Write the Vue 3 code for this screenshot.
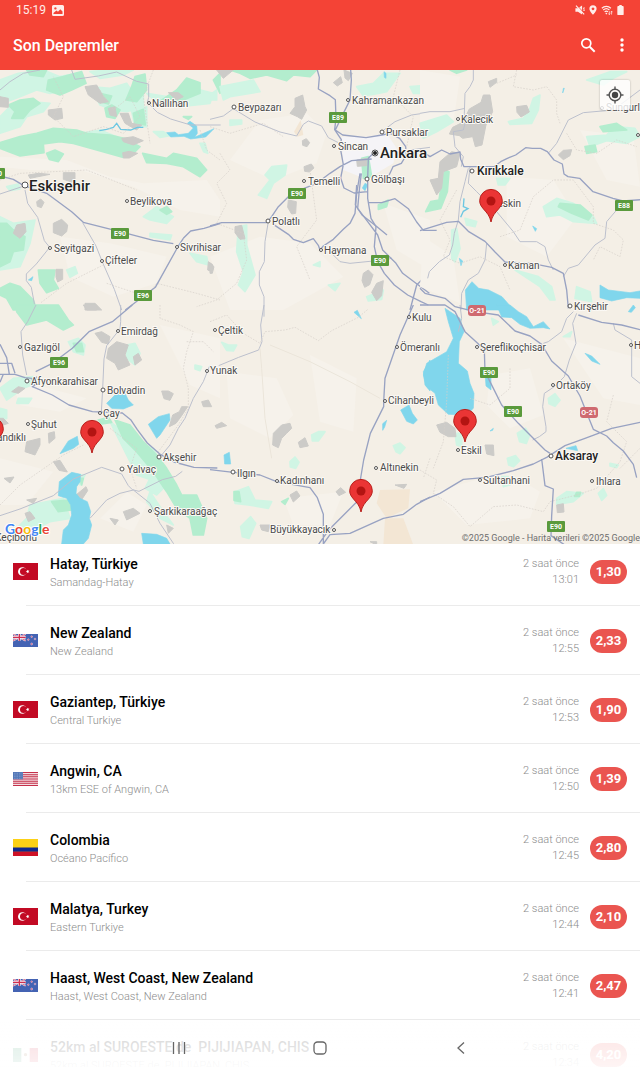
<template>
  <div class="app">
    <header class="top">
      <div class="status">
        <span class="clock">15:19</span>
        <svg class="picture" viewBox="0 0 12 11" width="12" height="11">
          <path fill="currentColor" fill-rule="evenodd"
            d="M1.5 0h9A1.5 1.5 0 0 1 12 1.500v8A1.500 1.500 0 0 1 10.500 11h-9A1.500 1.500 0 0 1 0 9.500v-8A1.500 1.500 0 0 1 1.500 0zM1.500 9h9V6.500L8.300 4.200 6 6.800 4.400 5.600 1.500 8zM3.400 2.200a1.200 1.200 0 1 0 .01 0z" />
        </svg>
        <div class="status-icons">
          <svg viewBox="0 0 12 12" width="10" height="10">
            <path fill="currentColor" d="M.5 3.800h3L8.500 .5v11L3.500 8.200h-3z" />
            <path d="M2.200 .4l9.500 10" stroke="#f44336" stroke-width="1.200" />
            <path d="M1.200 .8l9.800 10.400M9.800 4.200l1.800-.8M9.800 6.200h2" stroke="currentColor" stroke-width="1.400" />
          </svg>
          <svg viewBox="0 0 10 12" width="8" height="10">
            <path fill="currentColor" fill-rule="evenodd"
              d="M5 0a4.500 4.500 0 0 1 4.500 4.500C9.500 7.500 5 12 5 12S.5 7.500 .5 4.500A4.500 4.500 0 0 1 5 0zM5 2.800a1.700 1.700 0 1 0 .01 0z" />
          </svg>
          <svg viewBox="0 0 14 12" width="12" height="10" fill="none" stroke="currentColor" stroke-width="1.500">
            <path d="M.8 3.800a8 8 0 0 1 10.800 0M2.500 6a5.500 5.500 0 0 1 7.400 0M4.200 8.200a3 3 0 0 1 4 0" />
            <circle cx="6.200" cy="10.300" r="1" fill="currentColor" stroke="none" />
            <path d="M9.800 7.500v4M8.600 10.200l1.200 1.400 1.100-1.400M12.500 11.500v-4M11.400 8.700l1.100-1.300 1.200 1.300" stroke-width=".9" />
          </svg>
          <svg viewBox="0 0 8 12" width="7" height="10">
            <path fill="currentColor" d="M2.500 0h3v1.300h1.300a1 1 0 0 1 1 1V11a1 1 0 0 1-1 1H1.200a1 1 0 0 1-1-1V2.300a1 1 0 0 1 1-1h1.300z" />
          </svg>
        </div>
      </div>
      <div class="toolbar">
        <h1>Son Depremler</h1>
        <button type="button" class="tool" aria-label="Ara">
          <svg viewBox="0 0 16 16" width="16" height="16" fill="none" stroke="currentColor">
            <circle cx="6.300" cy="6.300" r="4.500" stroke-width="1.700" />
            <path d="M9.700 9.700l5 5" stroke-width="2" />
          </svg>
        </button>
        <button type="button" class="tool more" aria-label="Menü">
          <svg viewBox="0 0 4 14" width="4" height="14" fill="currentColor">
            <circle cx="2" cy="2" r="1.700" />
            <circle cx="2" cy="7" r="1.700" />
            <circle cx="2" cy="12" r="1.700" />
          </svg>
        </button>
      </div>
    </header>

    <section class="map">
      <svg class="map-canvas" viewBox="0 0 640 474">
        <rect width="640" height="474" class="land" />
        <!-- tiles are drawn at three times the map scale -->
        <g v-for="tile in tiles" :key="tile.x + '-' + tile.y"
          :transform="`translate(${tile.x} ${tile.y}) scale(0.33333)`">
          <path v-for="(s, i) in tile.shapes" :key="i" :class="s[0]" :d="s[1]" />
        </g>

        <g v-for="(s, i) in shields" :key="'s' + i" :transform="`translate(${s[0]} ${s[1]})`">
          <rect :class="s[2][0] === 'O' ? 'shield-red' : 'shield'" x="-9" y="-6" width="18" height="11"
            :rx="s[2][0] === 'O' ? 3 : 1" />
          <text class="shield-text" y="2" text-anchor="middle">{{ s[2] }}</text>
        </g>

        <circle v-for="(t, i) in dots" :key="'d' + i" class="dot" :cx="t[0]" :cy="t[1]" :r="t[2]" />
        <circle class="dot" cx="375" cy="83" r="3" />
        <circle cx="375" cy="83" r="2" fill="#222" />

        <text v-for="(t, i) in towns" :key="'t' + i" class="town" :class="t[3]" :x="t[0]" :y="t[1]">{{ t[2] }}</text>
        <text class="town" x="521" y="137" text-anchor="end">Keskin</text>
        <text class="town" x="26" y="371" text-anchor="end">Sandıklı</text>
        <text class="town" x="37" y="471" text-anchor="end">Keçiborlu</text>

        <g v-for="(p, i) in pins" :key="'p' + i" :transform="`translate(${p[0]} ${p[1]})`">
          <path class="pin"
            d="M0 0C-1-6-4-9-7.500-13C-10-16-11.300-18-11.300-21.300A11.300 11.300 0 0 1 11.300-21.300C11.300-18 10-16 7.500-13C4-9 1-6 0 0z" />
          <circle cy="-21" r="4.500" fill="#b31412" />
        </g>

        <text class="google" x="5" y="464"><tspan fill="#4285f4">G</tspan><tspan fill="#ea4335">o</tspan><tspan
            fill="#fbbc05">o</tspan><tspan fill="#4285f4">g</tspan><tspan fill="#34a853">l</tspan><tspan
            fill="#ea4335">e</tspan></text>
        <text class="copyright" x="640" y="471" text-anchor="end">©2025 Google - Harita verileri ©2025 Google</text>
      </svg>
      <button type="button" class="locate" aria-label="Konumum">
        <svg viewBox="0 0 18 18" width="18" height="18" fill="none" stroke="#555" stroke-width="1.400">
          <circle cx="9" cy="9" r="5.800" />
          <circle cx="9" cy="9" r="3.200" fill="#444" stroke="none" />
          <path d="M9 .5v3M9 14.500v3M.5 9h3M14.500 9h3" />
        </svg>
      </button>
    </section>

    <ul class="list">
      <li v-for="(q, i) in quakes" :key="i" class="row">
        <span class="flag">
          <svg v-if="q.flag === 'tr'" viewBox="0 0 75 51" width="25" height="17">
            <rect width="75" height="51" fill="#c20a24" />
            <circle cx="28" cy="25.500" r="13" fill="#fff" />
            <circle cx="31.500" cy="25.500" r="10.500" fill="#c20a24" />
            <path fill="#fff" d="M38 25.500l4-1.500V20l3 3.400 4-1.400-2.200 3.500 2.200 3.500-4-1.400-3 3.400V27z" />
          </svg>
          <svg v-else-if="q.flag === 'nz'" viewBox="0 0 75 39" width="25" height="13">
            <rect width="75" height="39" fill="#4463b3" />
            <path d="M0 0l38 20M38 0L0 20" stroke="#f2e4ee" stroke-width="5" />
            <path d="M0 0l38 20M38 0L0 20" stroke="#d04060" stroke-width="2" />
            <path d="M19 0v20M0 10h38" stroke="#f7eef4" stroke-width="8" />
            <path d="M19 0v20M0 10h38" stroke="#cf2f4f" stroke-width="4" />
            <g fill="#e2496b" stroke="#dfe5f6" stroke-width="1.500">
              <circle cx="56" cy="8" r="2.500" />
              <circle cx="46" cy="17" r="2.500" />
              <circle cx="66" cy="15" r="2.500" />
              <circle cx="56" cy="30" r="3" />
            </g>
          </svg>
          <svg v-else-if="q.flag === 'us'" viewBox="0 0 75 42" width="25" height="14">
            <rect width="75" height="42" fill="#f3dde2" />
            <path d="M0 1.600h75M0 8.100h75M0 14.500h75M0 21h75M0 27.500h75M0 33.900h75M0 40.400h75" stroke="#c5304a"
              stroke-width="3.200" />
            <rect width="30" height="22" fill="#5478b8" />
            <path d="M3 4h26M3 9h26M3 14h26M3 19h26" stroke="#b9cae6" stroke-width="1.500" stroke-dasharray="2 3" />
          </svg>
          <svg v-else-if="q.flag === 'co'" viewBox="0 0 75 51" width="25" height="17">
            <rect width="75" height="51" fill="#fcd116" />
            <rect y="25.500" width="75" height="13" fill="#10298e" />
            <rect y="38" width="75" height="13" fill="#ce1126" />
          </svg>
          <svg v-else viewBox="0 0 75 42" width="25" height="14">
            <rect width="75" height="42" fill="#fff" />
            <rect width="25" height="42" fill="#1f8a5b" />
            <rect x="50" width="25" height="42" fill="#d0203a" />
            <circle cx="37.500" cy="20" r="5" fill="#8c6239" />
          </svg>
        </span>
        <div class="place">
          <h2>{{ q.title }}</h2>
          <p>{{ q.area }}</p>
        </div>
        <div class="when">
          <span>{{ q.ago }}</span>
          <time>{{ q.time }}</time>
        </div>
        <span class="mag">{{ q.mag }}</span>
      </li>
    </ul>

    <nav class="navbar">
      <button type="button" aria-label="Son uygulamalar">
        <svg viewBox="0 0 14 14" width="14" height="14" fill="none" stroke="currentColor" stroke-width="1.300">
          <path d="M1.500 1v12M7 1v12M12.500 1v12" />
        </svg>
      </button>
      <button type="button" aria-label="Ana ekran">
        <svg viewBox="0 0 14 14" width="14" height="14" fill="none" stroke="currentColor" stroke-width="1.300">
          <rect x="1" y="1" width="12" height="12" rx="3.500" />
        </svg>
      </button>
      <button type="button" aria-label="Geri">
        <svg viewBox="0 0 14 14" width="14" height="14" fill="none" stroke="currentColor" stroke-width="1.300">
          <path d="M10 1.500L4 7l6 5.500" />
        </svg>
      </button>
    </nav>
  </div>
</template>

<script setup>
import { ref } from 'vue';

const quakes = ref([
  { flag: 'tr', title: 'Hatay, Türkiye', area: 'Samandag-Hatay', ago: '2 saat önce', time: '13:01', mag: '1,30' },
  { flag: 'nz', title: 'New Zealand', area: 'New Zealand', ago: '2 saat önce', time: '12:55', mag: '2,33' },
  { flag: 'tr', title: 'Gaziantep, Türkiye', area: 'Central Turkiye', ago: '2 saat önce', time: '12:53', mag: '1,90' },
  { flag: 'us', title: 'Angwin, CA', area: '13km ESE of Angwin, CA', ago: '2 saat önce', time: '12:50', mag: '1,39' },
  { flag: 'co', title: 'Colombia', area: 'Océano Pacífico', ago: '2 saat önce', time: '12:45', mag: '2,80' },
  { flag: 'tr', title: 'Malatya, Turkey', area: 'Eastern Turkiye', ago: '2 saat önce', time: '12:44', mag: '2,10' },
  { flag: 'nz', title: 'Haast, West Coast, New Zealand', area: 'Haast, West Coast, New Zealand', ago: '2 saat önce', time: '12:41', mag: '2,47' },
  { flag: 'mx', title: '52km al SUROESTE de\u00a0 PIJIJIAPAN, CHIS', area: '52km al SUROESTE de\u00a0 PIJIJIAPAN, CHIS', ago: '2 saat önce', time: '12:34', mag: '4,20' },
]);

const pins = [[491, 152], [92, 383], [465, 372], [361, 442], [-8, 380]];

const towns = [
  [152, 37, 'Nallıhan'], [29, 121, 'Eskişehir', 'city'], [130, 135, 'Beylikova'], [54, 182, 'Seyitgazi'],
  [105, 194, 'Çifteler'], [180, 181, 'Sivrihisar'], [352, 34, 'Kahramankazan'], [238, 41, 'Beypazarı'],
  [386, 66, 'Pursaklar'], [338, 80, 'Sincan'], [380, 88, 'Ankara', 'city'], [308, 115, 'Temelli'],
  [371, 113, 'Gölbaşı'], [272, 155, 'Polatlı'], [324, 184, 'Haymana'], [461, 53, 'Kalecik'],
  [477, 105, 'Kırıkkale', 'mid'], [508, 199, 'Kaman'], [574, 240, 'Kırşehir'], [606, 41, 'Sungurlu'],
  [121, 265, 'Emirdağ'], [24, 281, 'Gazlıgöl'], [31, 315, 'Afyonkarahisar'], [107, 324, 'Bolvadin'],
  [103, 347, 'Çay'], [31, 358, 'Şuhut'], [163, 391, 'Akşehir'], [127, 403, 'Yalvaç'],
  [154, 445, 'Şarkikaraağaç'], [218, 264, 'Çeltik'], [210, 304, 'Yunak'], [412, 251, 'Kulu'],
  [400, 281, 'Ömeranlı'], [388, 334, 'Cihanbeyli'], [237, 407, 'Ilgın'], [280, 414, 'Kadınhanı'],
  [380, 401, 'Altınekin'], [270, 463, 'Büyükkayacık'], [480, 281, 'Şereflikoçhisar'], [634, 279, 'Hacıbektaş'],
  [556, 319, 'Ortaköy'], [461, 384, 'Eskil'], [555, 390, 'Aksaray', 'mid'], [483, 414, 'Sultanhani'],
  [596, 415, 'Ihlara'],
];

const dots = [
  [149, 33, 1.5], [25, 115, 3], [127, 131, 1.5], [50, 178, 1.5], [102, 191, 1.5], [177, 177, 1.5],
  [348, 30, 1.5], [234, 37, 2], [382, 62, 2], [334, 76, 1.5], [304, 111, 1.5], [367, 109, 2],
  [268, 151, 2], [321, 180, 1.5], [458, 49, 1.5], [472, 101, 2], [505, 195, 1.5], [570, 236, 2],
  [602, 38, 1.5], [638, 65, 1.5], [118, 261, 1.5], [20, 277, 1.5], [27, 311, 2], [103, 320, 2],
  [100, 343, 1.5], [28, 354, 1.5], [159, 387, 2], [122, 399, 2], [150, 441, 1.5], [215, 260, 1.5],
  [207, 301, 1.5], [409, 247, 1.5], [397, 277, 1.5], [385, 331, 1.5], [233, 402, 2], [277, 411, 1.5],
  [376, 398, 1.5], [334, 460, 1.5], [477, 277, 1.5], [631, 275, 1.5], [553, 315, 1.5], [458, 380, 1.5],
  [551, 386, 2], [480, 410, 1.5], [592, 411, 1.5],
];

const shields = [
  [120, 164, 'E90'], [143, 226, 'E96'], [-4, 104, 'E90'], [338, 48, 'E89'], [297, 124, 'E90'], [380, 191, 'E90'],
  [624, 136, 'E88'], [59, 293, 'E96'], [489, 303, 'E90'], [513, 342, 'E90'], [556, 457, 'E90'],
  [477, 241, 'O-21'], [589, 343, 'O-21'],
];

const tiles = [
  {
    x: 0, y: 0, shapes: [
      ['pale', 'M0 260L200 270 330 320 430 340 620 330 660 390 660 440 540 420 400 350 240 300 90 300 0 290zM180 500L330 520 500 560 470 640 340 680 210 620z'],
      ['mint-light', 'M0 30L55 10 130 0 180 20 230 10 245 35 200 60 150 70 110 60 60 80 20 95 0 90zM30 110L90 95 150 100 130 125 80 140 60 170 0 190 0 140zM270 50L330 55 380 40 400 70 430 75 430 110 380 125 340 120 300 105zM395 125L440 110 440 170 405 170zM150 190L200 180 240 190 300 180 350 200 300 215 200 205zM440 70L500 80 560 50 640 70 630 100 540 110 470 96zM430 440L470 410 520 440 500 460 450 450zM450 490L515 495 510 510 450 500zM570 550L620 560 625 585 590 575zM0 440L40 460 105 450 90 520 60 590 0 600zM200 600L225 590 232 610 210 622zM270 5L320 0 400 0 370 15 300 25zM460 185l30 0 20 12-30 5zM600 220l15 0 8 30-12-5zM20 350l35-8 5 15-30 5z'],
      ['mint', 'M25 105L60 90 100 85 120 100 90 120 70 145 35 145 45 125zM80 0H140L130 20 90 15zM145 30L190 20 245 5 258 40 215 60 180 75 140 60zM395 50L405 20 435 12 440 60 410 95 378 90zM315 115L335 105 360 120 345 145 320 140zM290 68L335 78 325 102 300 95zM400 130L430 118 436 165 405 160zM0 218L60 200 110 190 160 175 230 180 260 190 330 195 372 205 420 230 400 250 370 262 290 240 220 220 180 215 130 222 132 248 60 258 0 235zM140 250L165 240 190 252 175 275 148 268zM428 250L500 265 520 250 590 265 620 300 600 320 550 290 500 280 440 278zM470 100L530 60 560 24 600 38 600 70 550 90 490 95zM640 30l20-20v60zM0 460L20 460 40 480 75 500 70 540 40 545 30 575 0 590zM115 600L165 600 160 630 175 655 140 668 120 640zM0 655L30 640 60 650 100 690 110 720 40 720 20 685 0 675zM550 140h25l-10 8zM480 420l20-10 15 15-15 8z'],
      ['grey', 'M255 50L290 45 310 80 325 95 300 100 265 75zM325 115L345 110 350 140 330 135zM145 120L185 115 188 145 165 150 145 135zM0 80L25 85 25 112 0 110zM360 130L385 130 395 160 425 165 410 180 375 160zM365 205L400 200 430 212 400 225 370 215zM368 248l20-4 25 6-25 14-18 0zM190 308h35v20l-10 8-25-8zM85 315l30-5 35 3-40 8-20 4zM110 395l12-8 10 10-8 16-12-4zM160 460L185 448 203 465 200 485 185 498 160 488zM50 465L75 460 78 485 60 505 40 490zM168 598h20v30l-15 8-5-15zM505 68h30l15 12-20 10zM625 575l15 10-5 20-12-5zM255 700h30l20 20h-50z'],
      ['water-line', 'M298 182l22-4 20-6 10-12 12 18 30 2 20-8h18'],
      ['water', 'M500 188l25-2 10 8 30-4 15-16-18-14 8-6 20 14 2 22-8 12 58-26-25 25-45 6-20-8-40 2zM85 630l14-10-4 12z'],
      ['minor', 'M215 0l10 28 70-10 55-12 60 28 36 8v40l-4 15 30 30 40 20 60 18 90 0M75 360l8 40 30 42 20 70 16 20-40 50-30 30 0 20 15 20 12 65M248 458l40 70 20 50 35 80 22 62M0 372l45-15 30-10M0 60l30-25 40-25 50-10'],
      ['border', 'M300 60l40 60 50-40 30 60-50 50-60-20-90 30-60-60 30-60-30-60M370 560l-50 20-120 60-80 60M600 180l20 60 40 30M320 640l120 40 30-40 120 30 70 20M0 330l60-20 200-10 150 60 M460 0l-30 80 20 140'],
      ['road', 'M0 318l40 10 30 18 70 24 75 55 35 32 110 28 100 26 60 10M376 720l90-68 64-115M550 505l22-22 40-8 48-14M530 536l20-31'],
    ],
  },
  {
    x: 210, y: 0, shapes: [
      ['pale', 'M150 150L290 130 350 190 320 280 190 330 60 270zM0 560L150 500 300 520 400 620 220 720 60 720zM520 400L660 450 660 600 560 540z'],
      ['urban', 'M395 200L480 200 530 190 560 235 550 280 500 310 475 330 400 300z'],
      ['mint-light', 'M30 50L130 30 150 65 60 80 40 90zM440 50l50-10 30-30 50 0-40 55-40 8-30 4zM600 50l60-5v25h-50zM60 150l35 0v12l-35 4zM145 375L180 330 165 315 185 290 230 285 225 315 190 340 170 385zM0 75l20-15v30H0zM85 470l25-5 0 60 25 90-30 50-20-20 15-40-20-60zM310 585l20-10v15zM355 645l35-5-15 22zM470 680l50-20-5 28-40 5z'],
      ['mint', 'M60 0H320L300 20 250 15 230 32 170 15 120 25 90 10zM455 265l20-5 10 60-25 5zM505 405l30-15-5 20-25 8z'],
      ['urban-tan', 'M252 185l20-35 8 45-18 5z'],
      ['grey', 'M255 85L278 75 285 110 290 120 275 148 262 140 240 130 255 110zM20 0h50l-30 25zM370 38l22-18 5 18-15 10zM402 0l25 10-12 22-10-8zM277 212l12-6 10 12-8 12-13-4zM282 290l22-8 8 12-14 12-14-2zM235 390l24 5-2 35-12 2-12-20zM75 470l20-4 10 40-15 2-15-20zM440 270l30-5v22l-28 2zM460 610l15-10 14 14-10 30-15 8-8-20zM500 640l20-8-5 45-15 15-15-25zM0 580l12 10-5 20H0z'],
      ['water', 'M465 340l8 4-8 18-8-8zM522 5l6 5v15l-5-3z'],
      ['minor', 'M0 148l40-10 30-22 65 40 75 30 50 12 20-35 15-10 40 15 20 35 30 15M175 455l-10 60-2 60-15 30v40l14 35v60M360 545l30 30 30 5 60-6 50-4 15-6M515 185l40-30 50-20 55-8M600 240l60-8'],
      ['border', 'M0 170l60 20 100-30 60 40M30 250l30 50-40 40 30 60-30 60 80 30 10 80-30 70-60 50-60 20M570 0l-20 80 60 60-20 90M300 300l20 150-60 80 40 100'],
      ['road', 'M322 0l6 22-3 35 35 20 16 12 2 55-4 35 20 30-4 20 10 55 -8 40 10 30 30 15 40-4M422 0l2 30-4 60-20 40-24 50 22 15 70 8 48-8 25-5 28 15 18 25 2 25-15 25-25 10-10 22-28 27M0 468l35-10h135l15-18 20-30 30-30 40-22 45-18 40-30 30-20 35-18 60-5M190 463l45 30 15 15 30 10 30-12 15 20 5 14 10-12 30-20 30-30 20-18 15-30 5-60 10-60M454 310l-6 50-5 55 30 40 30 40 15 45 40 40 20 30 40 30 40 30M473 325v60l10 60 15 25-5 60 10 45 20 35 30 35 40 30 40 20 22 10M475 398l40 0 40-12 40 30 25 40 20 25 40 0'],
      ['road', 'M440 345l-4 60 20 30 45 35 30 25M600 720l20-75 35-35 5-2M473 325l2-60 15-15'],
    ],
  },
  {
    x: 420, y: 0, shapes: [
      ['pale', 'M260 320L400 330 470 440 380 560 260 500zM480 180L640 200 660 350 560 330zM10 500L100 560 120 700 0 650zM0 0L120 20 100 160 0 160z'],
      ['mint-light', 'M500 30l70-25h50l-40 20-30 20zM265 155l45-10 20-30 10-30 20-10-5 45-20 40-65 3zM0 160l80-25 20 20-50 30-40 20zM500 200l60-5 25-25 60 5 15 25-40 20-60-8-50 18zM370 410l40-25 50 15 60 40 10 20-70-5-40-20-40 5zM135 445l35 10-5 15-25-5zM95 480l15-4 10 60-15 40-10-10zM285 600l70 20 40 30 10 40-15 0-30-40zM470 650l40 15 5 30-50-10zM230 325l40 0-15 20-20 0z'],
      ['mint', 'M75 300l12 5-5 60-20 50-45 10 15-30 25-5 8-50zM420 400l60 5 35 30-10 15-50-20-40-20zM540 170l50-10 30 20-70 5zM495 230l30-5 5 20-30 5zM140 0l-30 10-20-10z'],
      ['grey', 'M190 75l20 0 8 50-20 40-12 60-20 5-8-30-30 5-10-8-30-5 10-20 30-15 20-40 35-20zM205 35l25-10v12l-20 15zM290 110l30-4 8 20-25 15-12-14zM415 255l15-14 25-2-5 18-20 12zM95 245l25 5-10 40-40 15-5 50-15 20-20-45 25-5 5-50z'],
      ['water-line', 'M132 385l-2 25 14 6-14 8-8 18'],
      ['water', 'M118 565l10 8-5 14zM338 468l12 8-4 8zM140 720l-4-60 20-25 20 20 30 5 40 20 35 40zM540 645l25 15 65 8 30-5v22l-40-2-45 10-35-10zM430 55l3 0-5 14z'],
      ['minor', 'M160 0l0 30-10 20-15 20-2 60 2 30-5 20-30 5 5 45 25 30-6 30M660 60l-80 60-90 8-45 22-15 30-20 40-25 30M150 290l-5 50 25 25 60 60 50 60 20 30 50 0 25 15 10 40 15 30M145 295l-10 40-15 60-5 55-12 40-5 35-10 30-30 20-30 30-5 20M200 520l-5 50-20 40-30 20-20 40-2 50M0 130l30-5 60 0 45-10M590 420l-30 35-5 50-30 20-50 60-30 10-15 25'],
      ['border', 'M290 0l-10 50 60 10 40-10 30 40v40l10 30M230 40l60-25M240 500l60-20 40-100 60-50 60 0 60 80 0 50 60 20 30 30-10 50-60-30-20 40M440 190l30 50 60 10 60-40 60 20M110 360l-50 90 30 60-20 50 50 20 60-20 60 30 30 70'],
      ['road', 'M0 240l30 20 35-20 25 12 30-6 2 22 10 22 90 0 20-15 20-10 25-10 30-22 20 2 25 0 20 10 20 25 25 12 5 30 12 8 35 5 40 40 60 20 30 8 80-6M0 482l80-25 35-3 30 30 50 30 30 32 30 30 80 4 60 12 35 18 10 50 5 55M0 655l15 15 60 15 30 25'],
    ],
  },
  {
    x: 0, y: 235, shapes: [
      ['pale', 'M30 220L260 280 180 320 60 300zM480 60L660 100 660 280 570 240zM0 460L160 500 80 600 0 600zM380 560L440 600 400 680 300 640z'],
      ['mint-light', 'M205 110l30-10 20 20-5 30-30-10zM380 120l25-5 15 30-15 35-25-20zM0 250l40-30 60-5 20 15-50 20-50 35zM0 310l20 5v25l-20 5zM55 280l40 0-10 15-35 0zM450 560l40 60 30 40-40-20-40-50zM90 600l100-20 20 60-60 10-60 30-60 10 50-50zM235 510l20 0-15 30zM585 180l20 5-5 12-15-5zM450 520l50 20-30 30-35-20zM330 350l80 60 50 20 30 60-20 40-60-20-30-60z'],
      ['mint', 'M50 0H175L205 45 220 60 190 75 140 45 80 60 50 20zM345 345L390 360 430 410 470 450 500 490 530 540 545 570 590 570 620 640 610 690 580 690 570 640 530 610 500 560 460 500 410 440 370 400zM295 345l30-8 10 15-30 5zM155 590l50-5 10 30-40 5zM220 115l25 0 5 25-20 0zM240 520l10 0-5 20z'],
      ['grey', 'M325 130L350 110 385 120 375 150 390 180 355 195 345 175 320 160zM285 85l20-5 25 15-5 22-20-5zM250 0h40v15h-30zM400 155l15-10 10 20-20 15zM35 260l20-15 20 5-20 15zM485 258l20 0 15 8-10 20-18-5zM545 305l18 0-20 30-15 20-20 10 10-35 20-10zM605 290l20-5 10 20-25 0zM80 410l40-10 0 20-15 30-30-10zM145 385l18-5 2 20-18 15zM160 470l20-4 22 35-25-5zM12 520l30-4-12 18zM228 570l30-25 5 12-20 30zM0 340h10l15 15-15 5zM80 585l30-5-10 15zM370 620l30-10 20 15-40 20zM330 640l25 5-10 15zM75 625l15-5 15 20-20 10zM500 660l20 10-15 15z'],
      ['water', 'M320 295L345 270 375 265 385 285 400 300 370 312 335 310zM445 358L475 335 508 326 510 345 480 390 470 400zM205 408L232 394 236 418 220 430 180 446zM178 530L215 502 242 508 240 530 230 545 228 565 240 580 262 590 272 620 268 640 275 660 265 700 250 717H185L190 675 205 660 215 630 212 600 200 580 175 572zM425 685L470 688 500 700 510 717H430z'],
      ['minor', 'M108 0l-25 50-20 30 5 70 12 60M362 0v50l-2 22-40 50-8 40-4 90-4 70M630 180l-20 50-30 50-25 60-20 30-25 50-25 30M0 632l60-20 100-40 60-50 85-35 60 20 20 35 12 12 20 5 70-35 40-10 20-15M270 640l50-55 40-20 40-10 50 40 30 60 40 60 20 25'],
      ['border', 'M480 0v40l60 20 40 20-20 60-10 50 15 60 0 60-30 50-60 80M330 370l80 60-20 60 20 60M0 600l60-60 130-90 60-30M560 110l50 0 30 30'],
      ['road', 'M397 0l-60 50-70 30-50 50-60 45-50 25M0 118l20 40 8 50M0 208l45 0 30 10 20 2 10 20-8 5 60 25 50 30 70 20 90 4 25 20 20 30 30 40 40 35 40 22 60 16 70 2M0 175l35 0 10 30M0 232l10-24M110 215l-10 20'],
    ],
  },
  {
    x: 210, y: 235, shapes: [
      ['pale', 'M50 200L200 220 250 330 180 400 60 340zM300 150L440 220 430 380 330 350zM220 580L400 560 360 660 250 660z'],
      ['sand', 'M510 555L600 553 595 610 550 630 530 640 500 595zM525 640L580 640 610 720H520z'],
      ['mint-light', 'M35 112l20 8 25 0-10 18-20-2zM305 390l20-10 20 0-20 28-18 0zM240 470l15-14 12 16-10 18-16-4zM550 422l20-8 15 14-15 18-12-6zM75 560l40-15 20 40 50 5-10 20-60-10-40-5zM92 665l30-30 15 20-20 45-20-5z'],
      ['mint', 'M215 590l20-10-10 18zM72 560l15 0 5 30-20-4z'],
      ['grey', 'M190 385L215 360 240 355 245 370 230 385 215 400 205 428 188 420zM265 412l20-14 10 25-25 5zM15 362l20-10 15 10-30 8zM378 560l14-12 15 14-20 10zM240 570l20-12 10 15-20 18zM150 660l30 0-5 20-20-5zM555 540l35-2-8 12zM480 710l20 0 0 10z'],
      ['water', 'M432 22l10-6 12 25zM572 315l25-15 10 25 15 20-12 12-20-8zM518 356l12-10-6 20-6 10zM660 165l-20 35 5 40 15 18zM42 450l16-8 4 35-18 0z'],
      ['minor', 'M162 0l-10 60 4 50-10 25-60 22-60 25'],
      ['faint', 'M150 130l5 60 10 150 20 120M180 120l120 50 120 60 90 50'],
      ['border', 'M0 50l50-20 50 55 50 30 15-35 60-5 30-8 70 40 40-30 80-40 30-25M660 460l-20 60'],
      ['road', 'M610 0l-40 90-45 130-4 70 0 15-40 80-20 80-10 60-5 60-30 30-60 60-35 50M0 494l70 8 80 8 50 20 100 18 22 30 18 50 0 90M340 717l20-28 60-4 100-45 60-12 40-30 40-22'],
    ],
  },
  {
    x: 420, y: 235, shapes: [
      ['pale', 'M210 210L330 190 370 330 270 370 200 300zM40 560L260 500 360 560 330 640 140 660zM430 100L660 160 660 300 550 280z'],
      ['mint-light', 'M385 280l20-14 15 20-15 18-18-8zM292 385l25-15 12 20-10 25-20-5zM105 385l20 0 0 40-15-5zM262 460l25-8 12 15-18 18-15-5zM245 515l20 0 5 25-20 5zM535 565l15-14 10 20-15 15zM410 580l30-20 50 5-30 25-50 8zM570 475l25 5-5 8-20-5zM430 95l25-15-5 15zM215 40l20 10-15 10z'],
      ['mint', 'M470 562l12 0-4 12-14 0z'],
      ['grey', 'M50 360L80 352 105 370 108 395 85 395 60 382zM195 420l25 0 2 32-22-5zM410 600l20-4 2 25-20 2z'],
      ['water', 'M75 10L120 40 132 80 118 110 115 175 142 198 150 235 162 265 160 310 140 330 85 328 55 300 45 265 20 245 10 210 20 175 80 140 100 100 85 50zM195 200l18 5 0 50-15-12zM230 0h40l25 20 25 15 20 30 30-15 20 22-20-4-40 2-30-12-25-20-30-2zM625 20l15-20 6 8-12 14zM438 430l30-8 5 15zM495 145l20 8 25 25-25-10zM210 378l10-8-2 6z'],
      ['minor', 'M470 25l-12 30 10 60-20 50-15 50-30 30-30 20-5 40 10 60 0 15-20 15-20 10M460 20l-20 20-15 40-40 30-15 5M580 55l5 20 50 30 0 110 25 20M120 0l5 40-10 40'],
      ['border', 'M0 495l50 30-10 40 60 40 50 60 70-60 70-5 80 20 20-30 80-20 60-20 70-80 20-60-60-60 20-80M85 150l-5 140-10 120-30 80M270 190l0 60-60 50-60-20M660 430l-60 60'],
      ['road', 'M0 0h75l30 20 30 60 38 35 20 20 2 65 30 60 20 40 50 55 50 50 30 30 15 10M0 590l60-25 70-42 70-6 80-20 60-20 40-20 55-35 60-22 80-30 85-18M105 5l60 15 70 10 50 48 45 15 35 25 30 50 50 45 35 60 20 50 20 50 40 20 20 20 30 25 30 40 10 40M365 462l10 80 25 10-5 80-2 60 40 27M475 30l70 22 60 8 55 14'],
    ],
  },
];
</script>

<style>
body {
  margin: 0;
}
</style>

<style scoped>
.app {
  height: 100vh;
  overflow: hidden;
  display: flex;
  flex-direction: column;
  background: #fff;
  font-family: Roboto, "Liberation Sans", sans-serif;
}

button {
  border: 0;
  padding: 0;
  background: none;
  color: inherit;
  display: flex;
  align-items: center;
  justify-content: center;
}

.top {
  flex: none;
  background: #f44336;
  color: #fff;
}

.status {
  height: 20px;
  display: flex;
  align-items: center;
  padding: 0 16px;
  color: #ffece9;
}

.clock {
  font-size: 12px;
}

.picture {
  margin-left: 6px;
}

.status-icons {
  margin-left: auto;
  display: flex;
  align-items: center;
  gap: 4px;
}

.toolbar {
  height: 50px;
  display: flex;
  align-items: center;
  padding: 0 10px 0 13px;
}

.toolbar h1 {
  margin: 0;
  flex: 1;
  font-size: 16px;
  font-weight: 500;
}

.tool {
  width: 28px;
  height: 32px;
}

.more {
  width: 24px;
  margin-left: 8px;
  margin-right: -4px;
}

.map {
  position: relative;
  flex: none;
  z-index: 1;
}

.map-canvas {
  display: block;
  width: 100%;
}

.land {
  fill: #f4efe6;
}

.pale {
  fill: #f6f2eb;
}

.urban {
  fill: #f5f4f7;
}

.urban-tan,
.sand {
  fill: #f3e6d4;
}

.mint,
.mint-light {
  fill: #b3edce;
  stroke: #b3edce;
  stroke-width: 5;
  stroke-linejoin: round;
}

.mint-light {
  fill: #d0f5e4;
  stroke: #d0f5e4;
}

.grey {
  fill: #cccbc8;
  stroke: #cccbc8;
  stroke-width: 3;
  stroke-linejoin: round;
}

.water {
  fill: #80d6ec;
  stroke: #80d6ec;
  stroke-width: 2;
  stroke-linejoin: round;
}

.water-line {
  fill: none;
  stroke: #6cc7e2;
  stroke-width: 4;
}

.road {
  fill: none;
  stroke: #98a2c2;
  stroke-width: 4;
  stroke-linejoin: round;
}

.minor {
  fill: none;
  stroke: #bcc0cd;
  stroke-width: 3;
  stroke-linejoin: round;
}

.faint {
  fill: none;
  stroke: #ebe5da;
  stroke-width: 3;
}

.border {
  fill: none;
  stroke: #d5cfc8;
  stroke-width: 2;
  stroke-dasharray: 5 4;
}

.shield {
  fill: #5a9a3c;
}

.shield-red {
  fill: #cf6a70;
}

.shield-text {
  fill: #fff;
  font-size: 7px;
  font-weight: 700;
}

.dot {
  fill: #fff;
  stroke: #555;
  stroke-width: 1;
}

.town {
  font-size: 10px;
  fill: #4a4a4a;
  stroke: #fbf9f5;
  stroke-width: 2px;
  stroke-linejoin: round;
  paint-order: stroke;
}

.city {
  font-size: 15px;
  font-weight: 500;
  fill: #222;
}

.mid {
  font-size: 12px;
  font-weight: 500;
  fill: #222;
}

.pin {
  fill: #ea3535;
  stroke: #b8201c;
  stroke-width: 1;
}

.google {
  font-family: Lato, sans-serif;
  font-size: 14px;
  font-weight: 700;
  stroke: #fff;
  stroke-width: 2px;
  paint-order: stroke;
}

.copyright {
  font-size: 9px;
  fill: #6e6e6e;
}

.locate {
  position: absolute;
  top: 10px;
  right: 10px;
  width: 30px;
  height: 30px;
  background: rgba(255, 255, 255, 0.8);
  border-radius: 2px;
  box-shadow: 0 0 2px rgba(0, 0, 0, 0.3);
}

/* scrolled a little, so the first row starts under the map */
.list {
  list-style: none;
  margin: -7px 0 0;
  padding: 0;
}

.row {
  height: 69px;
  display: flex;
  align-items: center;
  padding: 0 13px;
  box-sizing: border-box;
  position: relative;
}

.row::after {
  content: "";
  position: absolute;
  left: 26px;
  right: 0;
  bottom: 0;
  height: 1px;
  background: #ebebeb;
}

.flag {
  width: 25px;
  margin-right: 12px;
  display: flex;
}

.place {
  flex: 1;
  min-width: 0;
  white-space: nowrap;
}

.place h2 {
  margin: 0;
  font-size: 14px;
  line-height: 22px;
  font-weight: 500;
  color: #000;
}

.place p {
  margin: 0;
  font-size: 11px;
  line-height: 16px;
  font-weight: 300;
  color: #8c8c8c;
}

.when {
  display: flex;
  flex-direction: column;
  align-items: flex-end;
  font-size: 11px;
  line-height: 16px;
  font-weight: 300;
  color: #8c8c8c;
}

.mag {
  margin-left: 11px;
  width: 37px;
  border-radius: 12px;
  background: #ea5550;
  color: #fff;
  font-size: 13px;
  line-height: 24px;
  font-weight: 700;
  text-align: center;
}

.navbar {
  position: fixed;
  left: 0;
  right: 0;
  bottom: 0;
  height: 47px;
  box-sizing: border-box;
  padding-top: 9px;
  z-index: 2;
  display: flex;
  justify-content: center;
  background: linear-gradient(rgba(255, 255, 255, 0.82), rgba(255, 255, 255, 0.94));
  color: #666;
}

.navbar button {
  width: 22%;
}
</style>
